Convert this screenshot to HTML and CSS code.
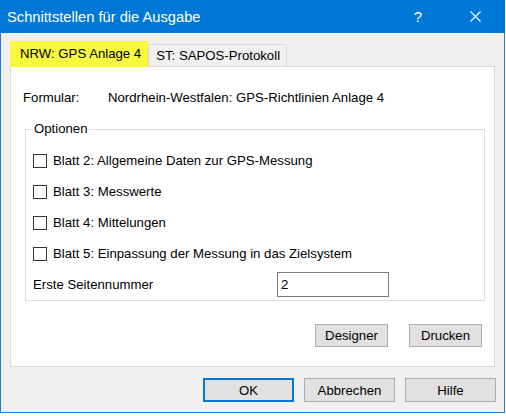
FILE: index.html
```html
<!DOCTYPE html>
<html lang="de">
<head>
  <meta charset="UTF-8">
  <title>Schnittstellen für die Ausgabe</title>
  <link rel="stylesheet" href="styles.css">
</head>
<body>
  <div class="window">
    <div class="titlebar">
      <span class="title">Schnittstellen für die Ausgabe</span>
      <span class="caption-btn help">?</span>
      <span class="caption-btn close">
        <svg width="11" height="11" viewBox="0 0 11 11"><path d="M0.5 0.5 L10.5 10.5 M10.5 0.5 L0.5 10.5" stroke="#fff" stroke-width="1.1" fill="none"/></svg>
      </span>
    </div>

    <div class="content">
      <div class="tabs">
        <div class="tab active">NRW: GPS Anlage 4</div>
        <div class="tab">ST: SAPOS-Protokoll</div>
      </div>

      <div class="panel">
        <div class="form-row">
          <span class="form-label">Formular:</span>
          <span>Nordrhein-Westfalen: GPS-Richtlinien Anlage 4</span>
        </div>

        <fieldset class="group">
          <legend>Optionen</legend>
          <label class="check-row"><span class="checkbox"></span>Blatt 2: Allgemeine Daten zur GPS-Messung</label>
          <label class="check-row"><span class="checkbox"></span>Blatt 3: Messwerte</label>
          <label class="check-row"><span class="checkbox"></span>Blatt 4: Mittelungen</label>
          <label class="check-row"><span class="checkbox"></span>Blatt 5: Einpassung der Messung in das Zielsystem</label>
          <div class="page-row">
            <span class="page-label">Erste Seitennummer</span>
            <span class="textbox">2</span>
          </div>
        </fieldset>

        <div class="panel-buttons">
          <button class="btn small">Designer</button>
          <button class="btn small">Drucken</button>
        </div>
      </div>

      <div class="dialog-buttons">
        <button class="btn default">OK</button>
        <button class="btn">Abbrechen</button>
        <button class="btn">Hilfe</button>
      </div>
    </div>
  </div>
</body>
</html>
```

FILE: styles.css
```css
body {
  margin: 0;
  background: #fff;
  font-family: "Liberation Sans", Arial, sans-serif;
  font-size: 13.2px;
  color: #000;
  overflow: hidden;
}
.window {
  width: 505px;
  height: 413px;
  box-sizing: border-box;
  border: 1px solid #1c7ed6;
  border-top: none;
  background: #f0f0f0;
  display: flex;
  flex-direction: column;
}
.titlebar {
  height: 33px;
  margin: 0 -1px;
  background: #0078d7;
  color: #fff;
  display: flex;
  align-items: center;
  flex-shrink: 0;
}
.title {
  font-size: 14.7px;
  padding-left: 7px;
  flex: 1;
}
.caption-btn {
  width: 46px;
  display: flex;
  justify-content: center;
}
.help {
  font-size: 15px;
  margin-right: 11px;
}
.close {
  margin-right: 7px;
}
.content {
  padding: 8px 8px 0 9px;
  display: flex;
  flex-direction: column;
}
.tabs {
  display: flex;
  align-items: flex-end;
  height: 25px;
}
.tab {
  height: 22px;
  box-sizing: border-box;
  padding: 0 6px 0 7px;
  line-height: 21px;
  border: 1px solid #d9d9d9;
  border-bottom: none;
  background: #f0f0f0;
}
.tab.active {
  height: 26px;
  margin-bottom: -1px;
  position: relative;
  border: none;
  background: #f8f83c;
  padding: 0 7px 0 10px;
  line-height: 25px;
}
.panel {
  width: 485px;
  box-sizing: border-box;
  background: #fff;
  border: 1px solid #d9d9d9;
  padding: 23px 12px 19px 12px;
}
.form-row {
  display: flex;
  line-height: 16px;
}
.form-label {
  width: 85px;
}
.group {
  margin: 15px 0 0 2px;
  width: 460px;
  box-sizing: border-box;
  min-width: 0;
  border: 1px solid #dcdcdc;
  padding: 8px 7px 0 7px;
}
.group legend {
  padding: 0 1px;
  line-height: 16px;
}
.check-row {
  display: flex;
  align-items: center;
  height: 31px;
}
.checkbox {
  width: 14px;
  height: 14px;
  box-sizing: border-box;
  border: 1px solid #333;
  background: #fff;
  margin-right: 6px;
}
.page-row {
  display: flex;
  align-items: center;
  height: 31px;
}
.page-label {
  width: 244px;
}
.textbox {
  width: 112px;
  height: 25px;
  box-sizing: border-box;
  border: 1px solid #7a7a7a;
  padding-left: 3px;
  line-height: 23px;
}
.panel-buttons {
  display: flex;
  justify-content: flex-end;
  gap: 21px;
  margin-top: 23px;
}
.btn {
  font: inherit;
  color: #000;
  background: #e1e1e1;
  border: 1px solid #adadad;
  width: 91px;
  height: 24px;
  padding: 0;
}
.btn.small {
  width: 73px;
  height: 23px;
}
.btn.default {
  border: 2px solid #0078d7;
}
.dialog-buttons {
  display: flex;
  justify-content: flex-end;
  gap: 10px;
  margin-top: 11px;
}
```
